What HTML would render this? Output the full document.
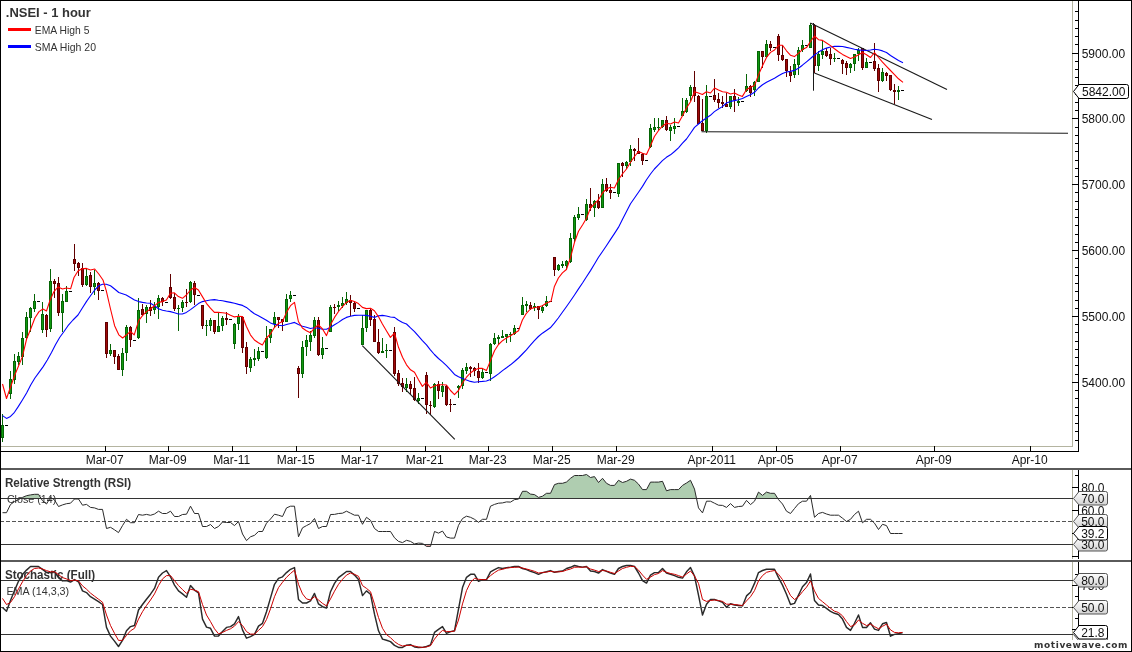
<!DOCTYPE html><html><head><meta charset="utf-8"><title>.NSEI - 1 hour</title><style>html,body{margin:0;padding:0;background:#fff;overflow:hidden}svg text{shape-rendering:auto}</style></head><body><svg width="1132" height="652" viewBox="0 0 1132 652" style="display:block;will-change:transform" font-family="Liberation Sans, sans-serif" shape-rendering="crispEdges">
<defs><linearGradient id="tg" x1="0" y1="0" x2="0" y2="1"><stop offset="0" stop-color="#ffffff"/><stop offset="1" stop-color="#d2d2d2"/></linearGradient></defs>
<rect x="0" y="0" width="1132" height="652" fill="#fff"/>
<rect x="1" y="446" width="1072" height="1" fill="#b4b4a0"/>
<rect x="1072" y="1" width="1" height="446" fill="#b4b4a0"/>
<rect x="1072" y="470" width="1" height="89" fill="#b4b4a0"/>
<rect x="1072" y="562" width="1" height="89" fill="#b4b4a0"/>
<rect x="1" y="451" width="1078" height="1" fill="#000"/>
<rect x="1078" y="1" width="1" height="451" fill="#000"/>
<rect x="1078" y="470" width="1" height="89" fill="#000"/>
<rect x="1078" y="562" width="1" height="89" fill="#000"/>
<rect x="1" y="468" width="1130" height="2" fill="#5a5a5a"/>
<rect x="1" y="560" width="1130" height="2" fill="#5a5a5a"/>
<rect x="1075" y="11" width="3" height="1" fill="#000"/>
<rect x="1075" y="20" width="3" height="1" fill="#000"/>
<rect x="1075" y="28" width="3" height="1" fill="#000"/>
<rect x="1075" y="36" width="3" height="1" fill="#000"/>
<rect x="1075" y="44" width="3" height="1" fill="#000"/>
<rect x="1072" y="53" width="6" height="1" fill="#000"/>
<text x="1081.7" y="58" font-size="12" fill="#111">5900.00</text>
<rect x="1075" y="61" width="3" height="1" fill="#000"/>
<rect x="1075" y="69" width="3" height="1" fill="#000"/>
<rect x="1075" y="77" width="3" height="1" fill="#000"/>
<rect x="1075" y="85" width="3" height="1" fill="#000"/>
<rect x="1075" y="94" width="3" height="1" fill="#000"/>
<rect x="1075" y="102" width="3" height="1" fill="#000"/>
<rect x="1075" y="110" width="3" height="1" fill="#000"/>
<rect x="1072" y="118" width="6" height="1" fill="#000"/>
<text x="1081.7" y="123" font-size="12" fill="#111">5800.00</text>
<rect x="1075" y="127" width="3" height="1" fill="#000"/>
<rect x="1075" y="135" width="3" height="1" fill="#000"/>
<rect x="1075" y="143" width="3" height="1" fill="#000"/>
<rect x="1075" y="151" width="3" height="1" fill="#000"/>
<rect x="1075" y="160" width="3" height="1" fill="#000"/>
<rect x="1075" y="168" width="3" height="1" fill="#000"/>
<rect x="1075" y="176" width="3" height="1" fill="#000"/>
<rect x="1072" y="184" width="6" height="1" fill="#000"/>
<text x="1081.7" y="189" font-size="12" fill="#111">5700.00</text>
<rect x="1075" y="192" width="3" height="1" fill="#000"/>
<rect x="1075" y="201" width="3" height="1" fill="#000"/>
<rect x="1075" y="209" width="3" height="1" fill="#000"/>
<rect x="1075" y="217" width="3" height="1" fill="#000"/>
<rect x="1075" y="225" width="3" height="1" fill="#000"/>
<rect x="1075" y="234" width="3" height="1" fill="#000"/>
<rect x="1075" y="242" width="3" height="1" fill="#000"/>
<rect x="1072" y="250" width="6" height="1" fill="#000"/>
<text x="1081.7" y="255" font-size="12" fill="#111">5600.00</text>
<rect x="1075" y="258" width="3" height="1" fill="#000"/>
<rect x="1075" y="267" width="3" height="1" fill="#000"/>
<rect x="1075" y="275" width="3" height="1" fill="#000"/>
<rect x="1075" y="283" width="3" height="1" fill="#000"/>
<rect x="1075" y="291" width="3" height="1" fill="#000"/>
<rect x="1075" y="300" width="3" height="1" fill="#000"/>
<rect x="1075" y="308" width="3" height="1" fill="#000"/>
<rect x="1072" y="316" width="6" height="1" fill="#000"/>
<text x="1081.7" y="321" font-size="12" fill="#111">5500.00</text>
<rect x="1075" y="324" width="3" height="1" fill="#000"/>
<rect x="1075" y="332" width="3" height="1" fill="#000"/>
<rect x="1075" y="341" width="3" height="1" fill="#000"/>
<rect x="1075" y="349" width="3" height="1" fill="#000"/>
<rect x="1075" y="357" width="3" height="1" fill="#000"/>
<rect x="1075" y="365" width="3" height="1" fill="#000"/>
<rect x="1075" y="374" width="3" height="1" fill="#000"/>
<rect x="1072" y="382" width="6" height="1" fill="#000"/>
<text x="1081.7" y="387" font-size="12" fill="#111">5400.00</text>
<rect x="1075" y="390" width="3" height="1" fill="#000"/>
<rect x="1075" y="398" width="3" height="1" fill="#000"/>
<rect x="1075" y="407" width="3" height="1" fill="#000"/>
<rect x="1075" y="415" width="3" height="1" fill="#000"/>
<rect x="1075" y="423" width="3" height="1" fill="#000"/>
<rect x="1075" y="431" width="3" height="1" fill="#000"/>
<rect x="1075" y="440" width="3" height="1" fill="#000"/>
<rect x="105" y="446" width="1" height="5" fill="#000"/>
<text x="104.7" y="463.8" font-size="12" fill="#111" text-anchor="middle">Mar-07</text>
<rect x="168" y="446" width="1" height="5" fill="#000"/>
<text x="167.7" y="463.8" font-size="12" fill="#111" text-anchor="middle">Mar-09</text>
<rect x="232" y="446" width="1" height="5" fill="#000"/>
<text x="231.7" y="463.8" font-size="12" fill="#111" text-anchor="middle">Mar-11</text>
<rect x="296" y="446" width="1" height="5" fill="#000"/>
<text x="295.7" y="463.8" font-size="12" fill="#111" text-anchor="middle">Mar-15</text>
<rect x="360" y="446" width="1" height="5" fill="#000"/>
<text x="359.7" y="463.8" font-size="12" fill="#111" text-anchor="middle">Mar-17</text>
<rect x="425" y="446" width="1" height="5" fill="#000"/>
<text x="424.7" y="463.8" font-size="12" fill="#111" text-anchor="middle">Mar-21</text>
<rect x="488" y="446" width="1" height="5" fill="#000"/>
<text x="487.7" y="463.8" font-size="12" fill="#111" text-anchor="middle">Mar-23</text>
<rect x="552" y="446" width="1" height="5" fill="#000"/>
<text x="551.7" y="463.8" font-size="12" fill="#111" text-anchor="middle">Mar-25</text>
<rect x="616" y="446" width="1" height="5" fill="#000"/>
<text x="615.7" y="463.8" font-size="12" fill="#111" text-anchor="middle">Mar-29</text>
<rect x="712" y="446" width="1" height="5" fill="#000"/>
<text x="711.7" y="463.8" font-size="12" fill="#111" text-anchor="middle">Apr-2011</text>
<rect x="776" y="446" width="1" height="5" fill="#000"/>
<text x="775.7" y="463.8" font-size="12" fill="#111" text-anchor="middle">Apr-05</text>
<rect x="840" y="446" width="1" height="5" fill="#000"/>
<text x="839.7" y="463.8" font-size="12" fill="#111" text-anchor="middle">Apr-07</text>
<rect x="934" y="446" width="1" height="5" fill="#000"/>
<text x="933.7" y="463.8" font-size="12" fill="#111" text-anchor="middle">Apr-09</text>
<rect x="1030" y="446" width="1" height="5" fill="#000"/>
<text x="1029.7" y="463.8" font-size="12" fill="#111" text-anchor="middle">Apr-10</text>
<rect x="2" y="414" width="1" height="28" fill="#056405"/>
<rect x="1" y="425" width="3" height="13" fill="#056405"/>
<rect x="2" y="426" width="1" height="11" fill="#0f9a0f"/>
<rect x="5" y="425" width="3" height="1" fill="#000"/>
<rect x="10" y="371" width="1" height="28" fill="#056405"/>
<rect x="9" y="379" width="3" height="15" fill="#056405"/>
<rect x="10" y="380" width="1" height="13" fill="#0f9a0f"/>
<rect x="14" y="354" width="1" height="30" fill="#056405"/>
<rect x="13" y="361" width="3" height="19" fill="#056405"/>
<rect x="14" y="362" width="1" height="17" fill="#0f9a0f"/>
<rect x="18" y="352" width="1" height="13" fill="#056405"/>
<rect x="17" y="356" width="3" height="6" fill="#056405"/>
<rect x="18" y="357" width="1" height="4" fill="#0f9a0f"/>
<rect x="22" y="332" width="1" height="33" fill="#056405"/>
<rect x="21" y="338" width="3" height="19" fill="#056405"/>
<rect x="22" y="339" width="1" height="17" fill="#0f9a0f"/>
<rect x="26" y="312" width="1" height="28" fill="#056405"/>
<rect x="25" y="317" width="3" height="21" fill="#056405"/>
<rect x="26" y="318" width="1" height="19" fill="#0f9a0f"/>
<rect x="30" y="307" width="1" height="25" fill="#056405"/>
<rect x="29" y="308" width="3" height="10" fill="#056405"/>
<rect x="30" y="309" width="1" height="8" fill="#0f9a0f"/>
<rect x="34" y="294" width="1" height="18" fill="#056405"/>
<rect x="33" y="301" width="3" height="8" fill="#056405"/>
<rect x="34" y="302" width="1" height="6" fill="#0f9a0f"/>
<rect x="37" y="301" width="3" height="1" fill="#000"/>
<rect x="42" y="302" width="1" height="31" fill="#056405"/>
<rect x="41" y="314" width="3" height="16" fill="#056405"/>
<rect x="42" y="315" width="1" height="14" fill="#0f9a0f"/>
<rect x="46" y="314" width="1" height="23" fill="#600000"/>
<rect x="45" y="315" width="3" height="15" fill="#600000"/>
<rect x="46" y="316" width="1" height="13" fill="#a00808"/>
<rect x="50" y="269" width="1" height="63" fill="#056405"/>
<rect x="49" y="281" width="3" height="48" fill="#056405"/>
<rect x="50" y="282" width="1" height="46" fill="#0f9a0f"/>
<rect x="54" y="279" width="1" height="19" fill="#600000"/>
<rect x="53" y="281" width="3" height="3" fill="#600000"/>
<rect x="54" y="282" width="1" height="1" fill="#a00808"/>
<rect x="58" y="277" width="1" height="39" fill="#600000"/>
<rect x="57" y="283" width="3" height="30" fill="#600000"/>
<rect x="58" y="284" width="1" height="28" fill="#a00808"/>
<rect x="62" y="294" width="1" height="38" fill="#056405"/>
<rect x="61" y="301" width="3" height="12" fill="#056405"/>
<rect x="62" y="302" width="1" height="10" fill="#0f9a0f"/>
<rect x="66" y="286" width="1" height="16" fill="#056405"/>
<rect x="65" y="291" width="3" height="11" fill="#056405"/>
<rect x="66" y="292" width="1" height="9" fill="#0f9a0f"/>
<rect x="69" y="291" width="3" height="1" fill="#000"/>
<rect x="74" y="244" width="1" height="27" fill="#600000"/>
<rect x="73" y="259" width="3" height="5" fill="#600000"/>
<rect x="74" y="260" width="1" height="3" fill="#a00808"/>
<rect x="78" y="262" width="1" height="14" fill="#600000"/>
<rect x="77" y="263" width="3" height="5" fill="#600000"/>
<rect x="78" y="264" width="1" height="3" fill="#a00808"/>
<rect x="82" y="263" width="1" height="24" fill="#600000"/>
<rect x="81" y="268" width="3" height="17" fill="#600000"/>
<rect x="82" y="269" width="1" height="15" fill="#a00808"/>
<rect x="86" y="269" width="1" height="17" fill="#056405"/>
<rect x="85" y="276" width="3" height="9" fill="#056405"/>
<rect x="86" y="277" width="1" height="7" fill="#0f9a0f"/>
<rect x="90" y="272" width="1" height="21" fill="#600000"/>
<rect x="89" y="275" width="3" height="12" fill="#600000"/>
<rect x="90" y="276" width="1" height="10" fill="#a00808"/>
<rect x="94" y="270" width="1" height="25" fill="#056405"/>
<rect x="93" y="283" width="3" height="4" fill="#056405"/>
<rect x="94" y="284" width="1" height="2" fill="#0f9a0f"/>
<rect x="98" y="282" width="1" height="18" fill="#600000"/>
<rect x="97" y="283" width="3" height="8" fill="#600000"/>
<rect x="98" y="284" width="1" height="6" fill="#a00808"/>
<rect x="101" y="290" width="3" height="1" fill="#000"/>
<rect x="106" y="322" width="1" height="36" fill="#600000"/>
<rect x="105" y="322" width="3" height="32" fill="#600000"/>
<rect x="106" y="323" width="1" height="30" fill="#a00808"/>
<rect x="110" y="344" width="1" height="12" fill="#056405"/>
<rect x="109" y="350" width="3" height="4" fill="#056405"/>
<rect x="110" y="351" width="1" height="2" fill="#0f9a0f"/>
<rect x="114" y="350" width="1" height="14" fill="#600000"/>
<rect x="113" y="350" width="3" height="7" fill="#600000"/>
<rect x="114" y="351" width="1" height="5" fill="#a00808"/>
<rect x="118" y="354" width="1" height="16" fill="#600000"/>
<rect x="117" y="356" width="3" height="14" fill="#600000"/>
<rect x="118" y="357" width="1" height="12" fill="#a00808"/>
<rect x="122" y="348" width="1" height="28" fill="#056405"/>
<rect x="121" y="353" width="3" height="17" fill="#056405"/>
<rect x="122" y="354" width="1" height="15" fill="#0f9a0f"/>
<rect x="126" y="325" width="1" height="36" fill="#056405"/>
<rect x="125" y="327" width="3" height="26" fill="#056405"/>
<rect x="126" y="328" width="1" height="24" fill="#0f9a0f"/>
<rect x="130" y="326" width="1" height="21" fill="#600000"/>
<rect x="129" y="327" width="3" height="13" fill="#600000"/>
<rect x="130" y="328" width="1" height="11" fill="#a00808"/>
<rect x="133" y="340" width="3" height="1" fill="#000"/>
<rect x="138" y="298" width="1" height="41" fill="#056405"/>
<rect x="137" y="310" width="3" height="28" fill="#056405"/>
<rect x="138" y="311" width="1" height="26" fill="#0f9a0f"/>
<rect x="142" y="304" width="1" height="12" fill="#600000"/>
<rect x="141" y="309" width="3" height="6" fill="#600000"/>
<rect x="142" y="310" width="1" height="4" fill="#a00808"/>
<rect x="146" y="305" width="1" height="18" fill="#056405"/>
<rect x="145" y="307" width="3" height="7" fill="#056405"/>
<rect x="146" y="308" width="1" height="5" fill="#0f9a0f"/>
<rect x="150" y="300" width="1" height="16" fill="#600000"/>
<rect x="149" y="307" width="3" height="4" fill="#600000"/>
<rect x="150" y="308" width="1" height="2" fill="#a00808"/>
<rect x="154" y="302" width="1" height="12" fill="#056405"/>
<rect x="153" y="307" width="3" height="3" fill="#056405"/>
<rect x="154" y="308" width="1" height="1" fill="#0f9a0f"/>
<rect x="158" y="295" width="1" height="24" fill="#056405"/>
<rect x="157" y="298" width="3" height="9" fill="#056405"/>
<rect x="158" y="299" width="1" height="7" fill="#0f9a0f"/>
<rect x="162" y="297" width="1" height="9" fill="#600000"/>
<rect x="161" y="298" width="3" height="4" fill="#600000"/>
<rect x="162" y="299" width="1" height="2" fill="#a00808"/>
<rect x="165" y="302" width="3" height="1" fill="#000"/>
<rect x="170" y="274" width="1" height="25" fill="#600000"/>
<rect x="169" y="287" width="3" height="11" fill="#600000"/>
<rect x="170" y="288" width="1" height="9" fill="#a00808"/>
<rect x="174" y="293" width="1" height="18" fill="#600000"/>
<rect x="173" y="297" width="3" height="12" fill="#600000"/>
<rect x="174" y="298" width="1" height="10" fill="#a00808"/>
<rect x="178" y="305" width="1" height="26" fill="#056405"/>
<rect x="177" y="308" width="3" height="1" fill="#056405"/>
<rect x="182" y="300" width="1" height="12" fill="#056405"/>
<rect x="181" y="302" width="3" height="6" fill="#056405"/>
<rect x="182" y="303" width="1" height="4" fill="#0f9a0f"/>
<rect x="186" y="289" width="1" height="18" fill="#600000"/>
<rect x="185" y="302" width="3" height="1" fill="#600000"/>
<rect x="190" y="281" width="1" height="22" fill="#056405"/>
<rect x="189" y="282" width="3" height="20" fill="#056405"/>
<rect x="190" y="283" width="1" height="18" fill="#0f9a0f"/>
<rect x="194" y="281" width="1" height="24" fill="#600000"/>
<rect x="193" y="283" width="3" height="12" fill="#600000"/>
<rect x="194" y="284" width="1" height="10" fill="#a00808"/>
<rect x="197" y="295" width="3" height="1" fill="#000"/>
<rect x="202" y="305" width="1" height="24" fill="#600000"/>
<rect x="201" y="305" width="3" height="21" fill="#600000"/>
<rect x="202" y="306" width="1" height="19" fill="#a00808"/>
<rect x="206" y="320" width="1" height="16" fill="#056405"/>
<rect x="205" y="325" width="3" height="1" fill="#056405"/>
<rect x="210" y="318" width="1" height="13" fill="#056405"/>
<rect x="209" y="320" width="3" height="6" fill="#056405"/>
<rect x="210" y="321" width="1" height="4" fill="#0f9a0f"/>
<rect x="214" y="320" width="1" height="14" fill="#600000"/>
<rect x="213" y="320" width="3" height="12" fill="#600000"/>
<rect x="214" y="321" width="1" height="10" fill="#a00808"/>
<rect x="218" y="312" width="1" height="20" fill="#056405"/>
<rect x="217" y="326" width="3" height="6" fill="#056405"/>
<rect x="218" y="327" width="1" height="4" fill="#0f9a0f"/>
<rect x="222" y="316" width="1" height="15" fill="#056405"/>
<rect x="221" y="318" width="3" height="8" fill="#056405"/>
<rect x="222" y="319" width="1" height="6" fill="#0f9a0f"/>
<rect x="226" y="312" width="1" height="13" fill="#600000"/>
<rect x="225" y="318" width="3" height="2" fill="#600000"/>
<rect x="229" y="319" width="3" height="1" fill="#000"/>
<rect x="234" y="323" width="1" height="26" fill="#056405"/>
<rect x="233" y="324" width="3" height="20" fill="#056405"/>
<rect x="234" y="325" width="1" height="18" fill="#0f9a0f"/>
<rect x="238" y="314" width="1" height="16" fill="#056405"/>
<rect x="237" y="316" width="3" height="8" fill="#056405"/>
<rect x="238" y="317" width="1" height="6" fill="#0f9a0f"/>
<rect x="242" y="317" width="1" height="36" fill="#600000"/>
<rect x="241" y="317" width="3" height="31" fill="#600000"/>
<rect x="242" y="318" width="1" height="29" fill="#a00808"/>
<rect x="246" y="342" width="1" height="32" fill="#600000"/>
<rect x="245" y="347" width="3" height="20" fill="#600000"/>
<rect x="246" y="348" width="1" height="18" fill="#a00808"/>
<rect x="250" y="357" width="1" height="15" fill="#056405"/>
<rect x="249" y="359" width="3" height="9" fill="#056405"/>
<rect x="250" y="360" width="1" height="7" fill="#0f9a0f"/>
<rect x="254" y="349" width="1" height="17" fill="#056405"/>
<rect x="253" y="358" width="3" height="2" fill="#056405"/>
<rect x="258" y="347" width="1" height="14" fill="#056405"/>
<rect x="257" y="351" width="3" height="8" fill="#056405"/>
<rect x="258" y="352" width="1" height="6" fill="#0f9a0f"/>
<rect x="261" y="351" width="3" height="1" fill="#000"/>
<rect x="266" y="326" width="1" height="33" fill="#056405"/>
<rect x="265" y="338" width="3" height="20" fill="#056405"/>
<rect x="266" y="339" width="1" height="18" fill="#0f9a0f"/>
<rect x="270" y="329" width="1" height="14" fill="#056405"/>
<rect x="269" y="329" width="3" height="9" fill="#056405"/>
<rect x="270" y="330" width="1" height="7" fill="#0f9a0f"/>
<rect x="274" y="312" width="1" height="16" fill="#056405"/>
<rect x="273" y="317" width="3" height="7" fill="#056405"/>
<rect x="274" y="318" width="1" height="5" fill="#0f9a0f"/>
<rect x="278" y="317" width="1" height="11" fill="#600000"/>
<rect x="277" y="317" width="3" height="3" fill="#600000"/>
<rect x="278" y="318" width="1" height="1" fill="#a00808"/>
<rect x="282" y="319" width="1" height="12" fill="#600000"/>
<rect x="281" y="319" width="3" height="3" fill="#600000"/>
<rect x="282" y="320" width="1" height="1" fill="#a00808"/>
<rect x="286" y="294" width="1" height="28" fill="#056405"/>
<rect x="285" y="299" width="3" height="23" fill="#056405"/>
<rect x="286" y="300" width="1" height="21" fill="#0f9a0f"/>
<rect x="290" y="291" width="1" height="11" fill="#056405"/>
<rect x="289" y="295" width="3" height="4" fill="#056405"/>
<rect x="290" y="296" width="1" height="2" fill="#0f9a0f"/>
<rect x="293" y="295" width="3" height="1" fill="#000"/>
<rect x="298" y="366" width="1" height="32" fill="#600000"/>
<rect x="297" y="368" width="3" height="6" fill="#600000"/>
<rect x="298" y="369" width="1" height="4" fill="#a00808"/>
<rect x="302" y="341" width="1" height="37" fill="#056405"/>
<rect x="301" y="347" width="3" height="27" fill="#056405"/>
<rect x="302" y="348" width="1" height="25" fill="#0f9a0f"/>
<rect x="306" y="335" width="1" height="21" fill="#056405"/>
<rect x="305" y="340" width="3" height="7" fill="#056405"/>
<rect x="306" y="341" width="1" height="5" fill="#0f9a0f"/>
<rect x="310" y="331" width="1" height="20" fill="#056405"/>
<rect x="309" y="335" width="3" height="7" fill="#056405"/>
<rect x="310" y="336" width="1" height="5" fill="#0f9a0f"/>
<rect x="314" y="317" width="1" height="21" fill="#056405"/>
<rect x="313" y="320" width="3" height="16" fill="#056405"/>
<rect x="314" y="321" width="1" height="14" fill="#0f9a0f"/>
<rect x="318" y="317" width="1" height="39" fill="#600000"/>
<rect x="317" y="320" width="3" height="35" fill="#600000"/>
<rect x="318" y="321" width="1" height="33" fill="#a00808"/>
<rect x="322" y="337" width="1" height="22" fill="#056405"/>
<rect x="321" y="348" width="3" height="7" fill="#056405"/>
<rect x="322" y="349" width="1" height="5" fill="#0f9a0f"/>
<rect x="325" y="348" width="3" height="1" fill="#000"/>
<rect x="330" y="305" width="1" height="27" fill="#056405"/>
<rect x="329" y="307" width="3" height="25" fill="#056405"/>
<rect x="330" y="308" width="1" height="23" fill="#0f9a0f"/>
<rect x="334" y="304" width="1" height="10" fill="#600000"/>
<rect x="333" y="307" width="3" height="1" fill="#600000"/>
<rect x="338" y="301" width="1" height="10" fill="#056405"/>
<rect x="337" y="305" width="3" height="2" fill="#056405"/>
<rect x="342" y="297" width="1" height="11" fill="#056405"/>
<rect x="341" y="303" width="3" height="3" fill="#056405"/>
<rect x="342" y="304" width="1" height="1" fill="#0f9a0f"/>
<rect x="346" y="292" width="1" height="13" fill="#056405"/>
<rect x="345" y="299" width="3" height="4" fill="#056405"/>
<rect x="346" y="300" width="1" height="2" fill="#0f9a0f"/>
<rect x="350" y="295" width="1" height="21" fill="#600000"/>
<rect x="349" y="300" width="3" height="3" fill="#600000"/>
<rect x="350" y="301" width="1" height="1" fill="#a00808"/>
<rect x="354" y="302" width="1" height="10" fill="#600000"/>
<rect x="353" y="303" width="3" height="6" fill="#600000"/>
<rect x="354" y="304" width="1" height="4" fill="#a00808"/>
<rect x="357" y="308" width="3" height="1" fill="#000"/>
<rect x="362" y="315" width="1" height="30" fill="#056405"/>
<rect x="361" y="328" width="3" height="17" fill="#056405"/>
<rect x="362" y="329" width="1" height="15" fill="#0f9a0f"/>
<rect x="366" y="310" width="1" height="22" fill="#056405"/>
<rect x="365" y="310" width="3" height="18" fill="#056405"/>
<rect x="366" y="311" width="1" height="16" fill="#0f9a0f"/>
<rect x="370" y="308" width="1" height="18" fill="#600000"/>
<rect x="369" y="310" width="3" height="10" fill="#600000"/>
<rect x="370" y="311" width="1" height="8" fill="#a00808"/>
<rect x="374" y="315" width="1" height="27" fill="#600000"/>
<rect x="373" y="319" width="3" height="23" fill="#600000"/>
<rect x="374" y="320" width="1" height="21" fill="#a00808"/>
<rect x="378" y="329" width="1" height="25" fill="#600000"/>
<rect x="377" y="342" width="3" height="11" fill="#600000"/>
<rect x="378" y="343" width="1" height="9" fill="#a00808"/>
<rect x="382" y="338" width="1" height="15" fill="#056405"/>
<rect x="381" y="351" width="3" height="2" fill="#056405"/>
<rect x="386" y="344" width="1" height="14" fill="#056405"/>
<rect x="385" y="350" width="3" height="1" fill="#056405"/>
<rect x="389" y="350" width="3" height="1" fill="#000"/>
<rect x="394" y="327" width="1" height="49" fill="#600000"/>
<rect x="393" y="332" width="3" height="42" fill="#600000"/>
<rect x="394" y="333" width="1" height="40" fill="#a00808"/>
<rect x="398" y="370" width="1" height="16" fill="#600000"/>
<rect x="397" y="373" width="3" height="11" fill="#600000"/>
<rect x="398" y="374" width="1" height="9" fill="#a00808"/>
<rect x="402" y="378" width="1" height="14" fill="#600000"/>
<rect x="401" y="383" width="3" height="4" fill="#600000"/>
<rect x="402" y="384" width="1" height="2" fill="#a00808"/>
<rect x="406" y="378" width="1" height="14" fill="#056405"/>
<rect x="405" y="384" width="3" height="4" fill="#056405"/>
<rect x="406" y="385" width="1" height="2" fill="#0f9a0f"/>
<rect x="410" y="381" width="1" height="13" fill="#600000"/>
<rect x="409" y="384" width="3" height="5" fill="#600000"/>
<rect x="410" y="385" width="1" height="3" fill="#a00808"/>
<rect x="414" y="377" width="1" height="24" fill="#600000"/>
<rect x="413" y="388" width="3" height="12" fill="#600000"/>
<rect x="414" y="389" width="1" height="10" fill="#a00808"/>
<rect x="418" y="393" width="1" height="11" fill="#056405"/>
<rect x="417" y="398" width="3" height="3" fill="#056405"/>
<rect x="418" y="399" width="1" height="1" fill="#0f9a0f"/>
<rect x="421" y="398" width="3" height="1" fill="#000"/>
<rect x="426" y="372" width="1" height="42" fill="#600000"/>
<rect x="425" y="375" width="3" height="30" fill="#600000"/>
<rect x="426" y="376" width="1" height="28" fill="#a00808"/>
<rect x="430" y="401" width="1" height="14" fill="#600000"/>
<rect x="429" y="405" width="3" height="1" fill="#600000"/>
<rect x="434" y="383" width="1" height="25" fill="#056405"/>
<rect x="433" y="384" width="3" height="23" fill="#056405"/>
<rect x="434" y="385" width="1" height="21" fill="#0f9a0f"/>
<rect x="438" y="381" width="1" height="18" fill="#600000"/>
<rect x="437" y="384" width="3" height="7" fill="#600000"/>
<rect x="438" y="385" width="1" height="5" fill="#a00808"/>
<rect x="442" y="382" width="1" height="15" fill="#056405"/>
<rect x="441" y="386" width="3" height="6" fill="#056405"/>
<rect x="442" y="387" width="1" height="4" fill="#0f9a0f"/>
<rect x="446" y="385" width="1" height="21" fill="#600000"/>
<rect x="445" y="386" width="3" height="19" fill="#600000"/>
<rect x="446" y="387" width="1" height="17" fill="#a00808"/>
<rect x="450" y="399" width="1" height="13" fill="#600000"/>
<rect x="449" y="404" width="3" height="1" fill="#600000"/>
<rect x="453" y="404" width="3" height="1" fill="#000"/>
<rect x="458" y="385" width="1" height="13" fill="#056405"/>
<rect x="457" y="386" width="3" height="2" fill="#056405"/>
<rect x="462" y="368" width="1" height="21" fill="#056405"/>
<rect x="461" y="370" width="3" height="16" fill="#056405"/>
<rect x="462" y="371" width="1" height="14" fill="#0f9a0f"/>
<rect x="466" y="363" width="1" height="11" fill="#056405"/>
<rect x="465" y="367" width="3" height="4" fill="#056405"/>
<rect x="466" y="368" width="1" height="2" fill="#0f9a0f"/>
<rect x="470" y="366" width="1" height="11" fill="#600000"/>
<rect x="469" y="367" width="3" height="2" fill="#600000"/>
<rect x="474" y="367" width="1" height="9" fill="#600000"/>
<rect x="473" y="368" width="3" height="3" fill="#600000"/>
<rect x="474" y="369" width="1" height="1" fill="#a00808"/>
<rect x="478" y="363" width="1" height="20" fill="#600000"/>
<rect x="477" y="371" width="3" height="7" fill="#600000"/>
<rect x="478" y="372" width="1" height="5" fill="#a00808"/>
<rect x="482" y="369" width="1" height="10" fill="#056405"/>
<rect x="481" y="372" width="3" height="6" fill="#056405"/>
<rect x="482" y="373" width="1" height="4" fill="#0f9a0f"/>
<rect x="485" y="372" width="3" height="1" fill="#000"/>
<rect x="490" y="343" width="1" height="38" fill="#056405"/>
<rect x="489" y="344" width="3" height="30" fill="#056405"/>
<rect x="490" y="345" width="1" height="28" fill="#0f9a0f"/>
<rect x="494" y="333" width="1" height="12" fill="#056405"/>
<rect x="493" y="338" width="3" height="6" fill="#056405"/>
<rect x="494" y="339" width="1" height="4" fill="#0f9a0f"/>
<rect x="498" y="335" width="1" height="10" fill="#056405"/>
<rect x="497" y="337" width="3" height="2" fill="#056405"/>
<rect x="502" y="330" width="1" height="8" fill="#056405"/>
<rect x="501" y="336" width="3" height="2" fill="#056405"/>
<rect x="506" y="334" width="1" height="9" fill="#056405"/>
<rect x="505" y="334" width="3" height="3" fill="#056405"/>
<rect x="506" y="335" width="1" height="1" fill="#0f9a0f"/>
<rect x="510" y="332" width="1" height="10" fill="#056405"/>
<rect x="509" y="334" width="3" height="1" fill="#056405"/>
<rect x="514" y="325" width="1" height="10" fill="#056405"/>
<rect x="513" y="328" width="3" height="6" fill="#056405"/>
<rect x="514" y="329" width="1" height="4" fill="#0f9a0f"/>
<rect x="517" y="328" width="3" height="1" fill="#000"/>
<rect x="522" y="297" width="1" height="18" fill="#056405"/>
<rect x="521" y="305" width="3" height="10" fill="#056405"/>
<rect x="522" y="306" width="1" height="8" fill="#0f9a0f"/>
<rect x="526" y="301" width="1" height="11" fill="#056405"/>
<rect x="525" y="304" width="3" height="2" fill="#056405"/>
<rect x="530" y="302" width="1" height="8" fill="#600000"/>
<rect x="529" y="305" width="3" height="4" fill="#600000"/>
<rect x="530" y="306" width="1" height="2" fill="#a00808"/>
<rect x="534" y="303" width="1" height="8" fill="#056405"/>
<rect x="533" y="306" width="3" height="2" fill="#056405"/>
<rect x="538" y="306" width="1" height="13" fill="#600000"/>
<rect x="537" y="306" width="3" height="4" fill="#600000"/>
<rect x="538" y="307" width="1" height="2" fill="#a00808"/>
<rect x="542" y="305" width="1" height="8" fill="#056405"/>
<rect x="541" y="307" width="3" height="4" fill="#056405"/>
<rect x="542" y="308" width="1" height="2" fill="#0f9a0f"/>
<rect x="546" y="296" width="1" height="11" fill="#056405"/>
<rect x="545" y="301" width="3" height="5" fill="#056405"/>
<rect x="546" y="302" width="1" height="3" fill="#0f9a0f"/>
<rect x="549" y="301" width="3" height="1" fill="#000"/>
<rect x="554" y="257" width="1" height="19" fill="#600000"/>
<rect x="553" y="257" width="3" height="13" fill="#600000"/>
<rect x="554" y="258" width="1" height="11" fill="#a00808"/>
<rect x="558" y="264" width="1" height="7" fill="#056405"/>
<rect x="557" y="265" width="3" height="5" fill="#056405"/>
<rect x="558" y="266" width="1" height="3" fill="#0f9a0f"/>
<rect x="562" y="261" width="1" height="7" fill="#056405"/>
<rect x="561" y="264" width="3" height="2" fill="#056405"/>
<rect x="566" y="260" width="1" height="10" fill="#056405"/>
<rect x="565" y="261" width="3" height="5" fill="#056405"/>
<rect x="566" y="262" width="1" height="3" fill="#0f9a0f"/>
<rect x="570" y="233" width="1" height="30" fill="#056405"/>
<rect x="569" y="238" width="3" height="24" fill="#056405"/>
<rect x="570" y="239" width="1" height="22" fill="#0f9a0f"/>
<rect x="574" y="215" width="1" height="27" fill="#056405"/>
<rect x="573" y="217" width="3" height="22" fill="#056405"/>
<rect x="574" y="218" width="1" height="20" fill="#0f9a0f"/>
<rect x="578" y="207" width="1" height="13" fill="#056405"/>
<rect x="577" y="214" width="3" height="4" fill="#056405"/>
<rect x="578" y="215" width="1" height="2" fill="#0f9a0f"/>
<rect x="581" y="214" width="3" height="1" fill="#000"/>
<rect x="586" y="199" width="1" height="22" fill="#056405"/>
<rect x="585" y="204" width="3" height="16" fill="#056405"/>
<rect x="586" y="205" width="1" height="14" fill="#0f9a0f"/>
<rect x="590" y="188" width="1" height="23" fill="#600000"/>
<rect x="589" y="204" width="3" height="4" fill="#600000"/>
<rect x="590" y="205" width="1" height="2" fill="#a00808"/>
<rect x="594" y="200" width="1" height="17" fill="#056405"/>
<rect x="593" y="201" width="3" height="7" fill="#056405"/>
<rect x="594" y="202" width="1" height="5" fill="#0f9a0f"/>
<rect x="598" y="194" width="1" height="15" fill="#600000"/>
<rect x="597" y="201" width="3" height="7" fill="#600000"/>
<rect x="598" y="202" width="1" height="5" fill="#a00808"/>
<rect x="602" y="179" width="1" height="29" fill="#056405"/>
<rect x="601" y="184" width="3" height="24" fill="#056405"/>
<rect x="602" y="185" width="1" height="22" fill="#0f9a0f"/>
<rect x="606" y="178" width="1" height="14" fill="#600000"/>
<rect x="605" y="184" width="3" height="7" fill="#600000"/>
<rect x="606" y="185" width="1" height="5" fill="#a00808"/>
<rect x="610" y="184" width="1" height="15" fill="#600000"/>
<rect x="609" y="190" width="3" height="3" fill="#600000"/>
<rect x="610" y="191" width="1" height="1" fill="#a00808"/>
<rect x="613" y="192" width="3" height="1" fill="#000"/>
<rect x="618" y="163" width="1" height="34" fill="#056405"/>
<rect x="617" y="163" width="3" height="31" fill="#056405"/>
<rect x="618" y="164" width="1" height="29" fill="#0f9a0f"/>
<rect x="622" y="162" width="1" height="15" fill="#600000"/>
<rect x="621" y="163" width="3" height="3" fill="#600000"/>
<rect x="622" y="164" width="1" height="1" fill="#a00808"/>
<rect x="626" y="161" width="1" height="8" fill="#056405"/>
<rect x="625" y="162" width="3" height="4" fill="#056405"/>
<rect x="626" y="163" width="1" height="2" fill="#0f9a0f"/>
<rect x="630" y="145" width="1" height="21" fill="#056405"/>
<rect x="629" y="149" width="3" height="13" fill="#056405"/>
<rect x="630" y="150" width="1" height="11" fill="#0f9a0f"/>
<rect x="634" y="148" width="1" height="13" fill="#600000"/>
<rect x="633" y="149" width="3" height="2" fill="#600000"/>
<rect x="638" y="138" width="1" height="16" fill="#600000"/>
<rect x="637" y="151" width="3" height="3" fill="#600000"/>
<rect x="638" y="152" width="1" height="1" fill="#a00808"/>
<rect x="642" y="153" width="1" height="12" fill="#600000"/>
<rect x="641" y="154" width="3" height="7" fill="#600000"/>
<rect x="642" y="155" width="1" height="5" fill="#a00808"/>
<rect x="645" y="160" width="3" height="1" fill="#000"/>
<rect x="650" y="124" width="1" height="24" fill="#056405"/>
<rect x="649" y="128" width="3" height="19" fill="#056405"/>
<rect x="650" y="129" width="1" height="17" fill="#0f9a0f"/>
<rect x="654" y="118" width="1" height="14" fill="#056405"/>
<rect x="653" y="127" width="3" height="3" fill="#056405"/>
<rect x="654" y="128" width="1" height="1" fill="#0f9a0f"/>
<rect x="658" y="118" width="1" height="12" fill="#056405"/>
<rect x="657" y="127" width="3" height="1" fill="#056405"/>
<rect x="662" y="120" width="1" height="8" fill="#056405"/>
<rect x="661" y="120" width="3" height="7" fill="#056405"/>
<rect x="662" y="121" width="1" height="5" fill="#0f9a0f"/>
<rect x="666" y="116" width="1" height="15" fill="#600000"/>
<rect x="665" y="120" width="3" height="10" fill="#600000"/>
<rect x="666" y="121" width="1" height="8" fill="#a00808"/>
<rect x="670" y="125" width="1" height="16" fill="#056405"/>
<rect x="669" y="127" width="3" height="4" fill="#056405"/>
<rect x="670" y="128" width="1" height="2" fill="#0f9a0f"/>
<rect x="674" y="118" width="1" height="16" fill="#056405"/>
<rect x="673" y="126" width="3" height="3" fill="#056405"/>
<rect x="674" y="127" width="1" height="1" fill="#0f9a0f"/>
<rect x="677" y="126" width="3" height="1" fill="#000"/>
<rect x="682" y="98" width="1" height="18" fill="#056405"/>
<rect x="681" y="111" width="3" height="5" fill="#056405"/>
<rect x="682" y="112" width="1" height="3" fill="#0f9a0f"/>
<rect x="686" y="98" width="1" height="15" fill="#056405"/>
<rect x="685" y="100" width="3" height="12" fill="#056405"/>
<rect x="686" y="101" width="1" height="10" fill="#0f9a0f"/>
<rect x="690" y="85" width="1" height="16" fill="#056405"/>
<rect x="689" y="87" width="3" height="9" fill="#056405"/>
<rect x="690" y="88" width="1" height="7" fill="#0f9a0f"/>
<rect x="694" y="71" width="1" height="31" fill="#600000"/>
<rect x="693" y="87" width="3" height="9" fill="#600000"/>
<rect x="694" y="88" width="1" height="7" fill="#a00808"/>
<rect x="698" y="95" width="1" height="29" fill="#600000"/>
<rect x="697" y="96" width="3" height="28" fill="#600000"/>
<rect x="698" y="97" width="1" height="26" fill="#a00808"/>
<rect x="702" y="99" width="1" height="32" fill="#600000"/>
<rect x="701" y="123" width="3" height="8" fill="#600000"/>
<rect x="702" y="124" width="1" height="6" fill="#a00808"/>
<rect x="706" y="85" width="1" height="48" fill="#056405"/>
<rect x="705" y="96" width="3" height="35" fill="#056405"/>
<rect x="706" y="97" width="1" height="33" fill="#0f9a0f"/>
<rect x="709" y="96" width="3" height="1" fill="#000"/>
<rect x="714" y="79" width="1" height="23" fill="#600000"/>
<rect x="713" y="95" width="3" height="5" fill="#600000"/>
<rect x="714" y="96" width="1" height="3" fill="#a00808"/>
<rect x="718" y="93" width="1" height="15" fill="#600000"/>
<rect x="717" y="99" width="3" height="4" fill="#600000"/>
<rect x="718" y="100" width="1" height="2" fill="#a00808"/>
<rect x="722" y="96" width="1" height="12" fill="#600000"/>
<rect x="721" y="102" width="3" height="2" fill="#600000"/>
<rect x="726" y="93" width="1" height="14" fill="#600000"/>
<rect x="725" y="104" width="3" height="3" fill="#600000"/>
<rect x="726" y="105" width="1" height="1" fill="#a00808"/>
<rect x="730" y="96" width="1" height="13" fill="#056405"/>
<rect x="729" y="96" width="3" height="11" fill="#056405"/>
<rect x="730" y="97" width="1" height="9" fill="#0f9a0f"/>
<rect x="734" y="89" width="1" height="23" fill="#600000"/>
<rect x="733" y="96" width="3" height="4" fill="#600000"/>
<rect x="734" y="97" width="1" height="2" fill="#a00808"/>
<rect x="738" y="97" width="1" height="9" fill="#056405"/>
<rect x="737" y="101" width="3" height="2" fill="#056405"/>
<rect x="741" y="101" width="3" height="1" fill="#000"/>
<rect x="746" y="74" width="1" height="18" fill="#056405"/>
<rect x="745" y="86" width="3" height="5" fill="#056405"/>
<rect x="746" y="87" width="1" height="3" fill="#0f9a0f"/>
<rect x="750" y="85" width="1" height="12" fill="#600000"/>
<rect x="749" y="86" width="3" height="7" fill="#600000"/>
<rect x="750" y="87" width="1" height="5" fill="#a00808"/>
<rect x="754" y="81" width="1" height="15" fill="#056405"/>
<rect x="753" y="82" width="3" height="8" fill="#056405"/>
<rect x="754" y="83" width="1" height="6" fill="#0f9a0f"/>
<rect x="758" y="51" width="1" height="31" fill="#056405"/>
<rect x="757" y="51" width="3" height="31" fill="#056405"/>
<rect x="758" y="52" width="1" height="29" fill="#0f9a0f"/>
<rect x="762" y="51" width="1" height="17" fill="#600000"/>
<rect x="761" y="51" width="3" height="6" fill="#600000"/>
<rect x="762" y="52" width="1" height="4" fill="#a00808"/>
<rect x="766" y="40" width="1" height="17" fill="#056405"/>
<rect x="765" y="44" width="3" height="13" fill="#056405"/>
<rect x="766" y="45" width="1" height="11" fill="#0f9a0f"/>
<rect x="770" y="41" width="1" height="10" fill="#600000"/>
<rect x="769" y="44" width="3" height="4" fill="#600000"/>
<rect x="770" y="45" width="1" height="2" fill="#a00808"/>
<rect x="773" y="47" width="3" height="1" fill="#000"/>
<rect x="778" y="34" width="1" height="27" fill="#600000"/>
<rect x="777" y="36" width="3" height="19" fill="#600000"/>
<rect x="778" y="37" width="1" height="17" fill="#a00808"/>
<rect x="782" y="45" width="1" height="16" fill="#600000"/>
<rect x="781" y="55" width="3" height="5" fill="#600000"/>
<rect x="782" y="56" width="1" height="3" fill="#a00808"/>
<rect x="786" y="59" width="1" height="18" fill="#600000"/>
<rect x="785" y="59" width="3" height="12" fill="#600000"/>
<rect x="786" y="60" width="1" height="10" fill="#a00808"/>
<rect x="790" y="66" width="1" height="16" fill="#600000"/>
<rect x="789" y="72" width="3" height="4" fill="#600000"/>
<rect x="790" y="73" width="1" height="2" fill="#a00808"/>
<rect x="794" y="59" width="1" height="19" fill="#056405"/>
<rect x="793" y="64" width="3" height="11" fill="#056405"/>
<rect x="794" y="65" width="1" height="9" fill="#0f9a0f"/>
<rect x="798" y="47" width="1" height="28" fill="#056405"/>
<rect x="797" y="50" width="3" height="15" fill="#056405"/>
<rect x="798" y="51" width="1" height="13" fill="#0f9a0f"/>
<rect x="802" y="40" width="1" height="12" fill="#056405"/>
<rect x="801" y="45" width="3" height="5" fill="#056405"/>
<rect x="802" y="46" width="1" height="3" fill="#0f9a0f"/>
<rect x="805" y="45" width="3" height="1" fill="#000"/>
<rect x="810" y="23" width="1" height="25" fill="#056405"/>
<rect x="809" y="25" width="3" height="23" fill="#056405"/>
<rect x="810" y="26" width="1" height="21" fill="#0f9a0f"/>
<rect x="814" y="24" width="1" height="49" fill="#600000"/>
<rect x="813" y="25" width="3" height="41" fill="#600000"/>
<rect x="814" y="26" width="1" height="39" fill="#a00808"/>
<rect x="818" y="51" width="1" height="20" fill="#056405"/>
<rect x="817" y="54" width="3" height="12" fill="#056405"/>
<rect x="818" y="55" width="1" height="10" fill="#0f9a0f"/>
<rect x="822" y="41" width="1" height="18" fill="#056405"/>
<rect x="821" y="51" width="3" height="4" fill="#056405"/>
<rect x="822" y="52" width="1" height="2" fill="#0f9a0f"/>
<rect x="826" y="48" width="1" height="9" fill="#600000"/>
<rect x="825" y="51" width="3" height="5" fill="#600000"/>
<rect x="826" y="52" width="1" height="3" fill="#a00808"/>
<rect x="830" y="48" width="1" height="17" fill="#600000"/>
<rect x="829" y="54" width="3" height="5" fill="#600000"/>
<rect x="830" y="55" width="1" height="3" fill="#a00808"/>
<rect x="834" y="53" width="1" height="9" fill="#056405"/>
<rect x="833" y="58" width="3" height="1" fill="#056405"/>
<rect x="837" y="58" width="3" height="1" fill="#000"/>
<rect x="842" y="59" width="1" height="15" fill="#600000"/>
<rect x="841" y="60" width="3" height="4" fill="#600000"/>
<rect x="842" y="61" width="1" height="2" fill="#a00808"/>
<rect x="846" y="61" width="1" height="14" fill="#600000"/>
<rect x="845" y="63" width="3" height="5" fill="#600000"/>
<rect x="846" y="64" width="1" height="3" fill="#a00808"/>
<rect x="850" y="63" width="1" height="10" fill="#056405"/>
<rect x="849" y="64" width="3" height="4" fill="#056405"/>
<rect x="850" y="65" width="1" height="2" fill="#0f9a0f"/>
<rect x="854" y="54" width="1" height="17" fill="#056405"/>
<rect x="853" y="54" width="3" height="10" fill="#056405"/>
<rect x="854" y="55" width="1" height="8" fill="#0f9a0f"/>
<rect x="858" y="48" width="1" height="13" fill="#056405"/>
<rect x="857" y="50" width="3" height="4" fill="#056405"/>
<rect x="858" y="51" width="1" height="2" fill="#0f9a0f"/>
<rect x="862" y="48" width="1" height="22" fill="#600000"/>
<rect x="861" y="48" width="3" height="20" fill="#600000"/>
<rect x="862" y="49" width="1" height="18" fill="#a00808"/>
<rect x="866" y="58" width="1" height="10" fill="#056405"/>
<rect x="865" y="62" width="3" height="6" fill="#056405"/>
<rect x="866" y="63" width="1" height="4" fill="#0f9a0f"/>
<rect x="869" y="62" width="3" height="1" fill="#000"/>
<rect x="874" y="43" width="1" height="28" fill="#600000"/>
<rect x="873" y="61" width="3" height="8" fill="#600000"/>
<rect x="874" y="62" width="1" height="6" fill="#a00808"/>
<rect x="878" y="64" width="1" height="28" fill="#600000"/>
<rect x="877" y="68" width="3" height="13" fill="#600000"/>
<rect x="878" y="69" width="1" height="11" fill="#a00808"/>
<rect x="882" y="68" width="1" height="14" fill="#056405"/>
<rect x="881" y="72" width="3" height="9" fill="#056405"/>
<rect x="882" y="73" width="1" height="7" fill="#0f9a0f"/>
<rect x="886" y="72" width="1" height="9" fill="#600000"/>
<rect x="885" y="73" width="3" height="3" fill="#600000"/>
<rect x="886" y="74" width="1" height="1" fill="#a00808"/>
<rect x="890" y="75" width="1" height="16" fill="#600000"/>
<rect x="889" y="75" width="3" height="15" fill="#600000"/>
<rect x="890" y="76" width="1" height="13" fill="#a00808"/>
<rect x="894" y="84" width="1" height="20" fill="#600000"/>
<rect x="893" y="90" width="3" height="2" fill="#600000"/>
<rect x="898" y="86" width="1" height="14" fill="#056405"/>
<rect x="897" y="90" width="3" height="2" fill="#056405"/>
<rect x="901" y="90" width="3" height="1" fill="#000"/>
<line x1="362.3" y1="345.7" x2="454.8" y2="439.4" stroke="#1a1a1a" stroke-width="1.15" style="shape-rendering:auto"/>
<line x1="701.5" y1="131.7" x2="1068" y2="133.2" stroke="#1a1a1a" stroke-width="1.1" style="shape-rendering:auto"/>
<line x1="810.3" y1="23.1" x2="947" y2="89.6" stroke="#1a1a1a" stroke-width="1.15" style="shape-rendering:auto"/>
<line x1="814.4" y1="73" x2="932" y2="119.5" stroke="#1a1a1a" stroke-width="1.15" style="shape-rendering:auto"/>
<line x1="813.5" y1="23" x2="813.5" y2="90.7" stroke="#1a1a1a" stroke-width="1" style="shape-rendering:auto"/>
<polyline points="2.5,415.6 6.5,418.4 10.5,416.4 14.5,412.3 18.4,406.4 22.4,400.0 26.6,393.0 30.7,385.0 34.9,378.0 39.0,372.4 43.2,366.6 47.3,360.0 51.5,352.5 55.6,344.5 59.8,337.3 64.0,331.5 68.0,325.7 73.0,320.0 78.0,315.0 82.2,308.3 86.4,301.6 90.5,295.8 94.7,290.0 98.8,285.8 102.5,284.2 106.3,284.2 110.5,285.8 114.6,289.0 118.8,292.5 126.2,295.0 130.4,297.5 134.5,300.0 138.7,301.6 142.5,302.4 146.5,303.0 150.5,303.3 154.5,305.8 158.5,308.8 162.5,310.3 166.4,311.0 170.4,311.6 174.4,312.7 178.4,314.0 182.4,314.0 186.4,312.4 190.5,309.6 194.5,306.6 198.4,303.6 202.4,301.6 206.4,300.8 210.4,300.0 214.4,299.6 218.4,300.3 222.5,300.8 226.5,301.6 230.5,302.4 234.5,303.3 238.5,304.4 242.5,305.4 246.4,307.4 250.4,310.7 254.4,313.7 258.4,315.7 262.4,317.9 266.4,320.2 270.5,322.9 274.5,324.4 278.5,325.2 282.5,325.7 286.5,324.5 290.5,323.5 294.5,322.4 298.4,324.5 302.4,326.2 306.4,327.3 310.4,328.5 314.5,327.8 318.5,328.2 322.5,329.3 326.5,329.3 330.5,327.3 334.5,324.8 338.5,322.4 342.5,319.5 346.4,317.4 350.4,316.2 354.4,315.4 358.4,315.2 362.4,315.2 366.4,315.4 370.5,316.3 374.4,317.4 378.4,315.8 382.4,315.4 386.4,316.0 390.4,317.0 394.5,317.4 398.5,320.3 402.5,322.4 406.5,324.0 410.5,327.9 414.5,331.6 418.5,336.2 422.4,340.7 426.5,344.9 430.4,349.8 434.4,354.5 438.5,358.5 442.5,361.8 446.5,365.6 450.5,369.8 454.5,374.4 458.5,376.7 462.5,378.4 466.5,380.0 470.4,381.4 474.4,382.2 478.4,381.7 482.4,381.4 486.4,381.0 490.5,379.4 494.5,376.7 498.5,373.9 502.5,370.6 506.5,367.8 510.5,364.8 514.5,361.5 518.5,358.0 522.4,354.0 526.4,349.8 530.4,345.2 534.4,340.7 538.4,336.5 542.4,333.2 546.4,330.5 550.3,327.8 554.3,323.2 558.3,318.0 562.4,312.3 566.4,306.7 570.4,301.0 574.5,295.0 578.5,288.9 582.5,283.0 586.5,276.8 590.5,270.6 594.5,264.0 598.5,257.3 602.5,251.5 606.4,245.7 610.4,239.6 614.4,233.6 618.4,227.4 622.4,219.6 626.5,211.6 630.5,203.8 634.5,198.0 638.5,192.2 642.5,186.4 646.5,179.7 650.5,174.0 654.4,169.0 658.4,164.8 662.4,160.6 666.4,157.3 670.5,154.8 674.5,151.5 678.5,147.8 682.5,143.2 686.5,139.0 690.5,133.2 694.5,127.4 698.5,124.0 702.4,120.8 706.4,118.0 710.4,115.3 714.4,111.6 718.4,109.0 722.4,106.6 726.5,103.0 730.5,101.4 734.5,100.6 738.4,99.8 742.4,98.4 746.4,96.4 750.4,94.8 754.5,92.3 758.5,88.0 762.5,84.8 766.5,82.3 770.5,80.2 774.5,78.2 778.5,75.7 782.5,73.5 786.5,72.0 790.4,71.4 794.4,70.4 798.4,68.3 802.4,65.2 806.5,61.8 810.5,58.5 814.5,55.0 818.5,52.1 822.5,49.8 826.5,48.1 830.5,47.0 834.5,46.4 838.5,46.3 842.5,46.5 846.5,47.4 850.5,48.2 854.5,49.2 858.5,49.9 862.5,50.2 866.5,50.5 870.5,50.0 874.5,49.2 878.5,49.7 882.5,50.9 886.5,52.5 890.5,55.5 894.5,58.0 898.5,60.5 903.0,62.7" fill="none" stroke="#0000ff" stroke-width="1.1" stroke-linejoin="round" style="shape-rendering:auto" />
<polyline points="2.5,384.0 6.5,398.5 14.5,375.7 22.4,356.6 26.6,339.0 30.7,329.0 34.9,318.0 39.0,311.6 42.9,309.0 46.5,311.0 49.8,300.8 54.0,291.6 58.0,287.0 62.5,289.0 66.4,288.0 70.6,288.8 74.0,277.5 78.0,271.0 82.0,268.7 86.4,268.4 90.5,270.0 94.7,269.0 98.8,274.0 103.0,280.0 106.3,290.8 110.5,309.0 114.6,325.7 118.8,334.8 122.6,338.0 126.6,334.8 130.4,331.5 134.2,334.8 138.7,320.7 142.5,315.7 146.5,311.6 150.5,309.0 154.5,305.8 158.5,302.4 162.5,301.6 166.4,300.0 170.4,293.3 174.4,292.8 178.4,296.6 182.4,298.3 186.4,295.0 190.5,290.0 194.5,287.5 198.4,290.0 202.4,296.6 206.4,303.3 210.4,308.2 214.4,312.4 218.4,312.4 222.5,312.7 226.5,313.2 230.5,315.2 234.5,316.9 238.5,316.2 242.5,316.5 246.4,326.5 250.4,334.8 254.4,340.0 258.4,342.8 262.4,345.0 266.4,338.0 270.5,334.0 274.5,327.3 278.5,323.5 282.5,321.5 286.5,312.4 290.5,305.7 294.5,302.4 296.3,311.5 298.4,321.5 302.4,328.0 306.4,330.7 310.4,332.8 314.5,328.0 318.5,324.8 322.5,329.0 326.5,335.6 330.5,324.8 334.5,317.4 338.5,311.5 342.5,306.6 346.4,302.4 350.4,300.3 354.4,301.6 358.4,303.6 362.4,307.4 366.4,308.6 370.5,308.3 374.4,310.8 378.4,316.6 382.4,324.0 386.4,330.7 390.4,337.4 394.5,333.2 398.5,347.3 402.5,357.3 406.5,364.8 410.5,369.8 414.5,372.3 418.5,379.7 422.4,386.4 426.5,382.2 430.4,388.0 434.4,386.0 438.5,384.7 442.5,384.7 446.5,385.0 450.5,390.5 454.5,394.7 458.5,390.5 462.5,383.0 466.5,377.2 470.4,373.0 474.4,370.0 478.4,368.4 482.4,368.4 486.4,370.6 490.5,360.6 494.5,350.7 498.5,344.5 502.5,340.7 506.5,337.9 510.5,335.7 514.5,333.2 518.5,330.7 522.4,320.0 526.4,313.3 530.4,309.0 534.4,307.5 538.4,307.0 542.4,305.8 546.5,303.0 551.0,301.3 554.4,286.4 558.4,278.0 562.4,272.8 566.4,269.5 570.4,258.0 574.5,242.4 578.5,231.2 582.5,225.0 586.5,218.3 590.5,208.0 594.5,203.8 598.5,199.7 602.5,193.0 606.4,188.9 610.4,187.2 614.4,188.0 618.4,179.7 622.4,174.0 626.5,169.0 630.5,162.3 634.5,156.5 638.5,151.5 642.5,153.2 646.5,154.5 650.5,145.7 654.4,136.5 658.4,130.7 662.4,126.2 666.4,123.3 670.5,124.0 674.5,122.0 678.5,123.0 682.5,115.8 686.5,108.0 690.5,101.7 694.5,91.8 698.5,93.0 702.4,94.5 706.4,91.8 710.5,93.0 714.5,88.0 718.5,90.0 722.5,91.8 726.5,92.3 730.5,94.0 734.5,93.0 738.4,95.0 742.4,96.4 746.4,89.8 750.4,87.3 754.5,85.6 758.5,74.9 762.5,65.7 766.5,57.4 770.5,52.4 774.5,50.0 778.5,45.3 782.5,45.3 786.5,50.8 790.4,55.2 794.4,56.6 798.4,53.3 802.4,49.6 806.5,47.6 810.5,41.5 814.5,36.0 818.5,39.7 822.5,40.4 826.5,43.0 830.5,45.6 834.5,48.8 838.5,51.8 842.5,54.4 846.5,56.6 850.5,58.5 854.5,57.0 858.5,54.7 862.5,52.5 866.5,54.7 870.5,57.5 874.5,52.5 878.5,57.5 882.5,62.2 886.5,66.3 890.5,70.5 894.5,74.6 898.5,78.8 903.0,82.4" fill="none" stroke="#ff0000" stroke-width="1.1" stroke-linejoin="round" style="shape-rendering:auto" />
<text x="5.8" y="17" font-size="13" font-weight="bold" fill="#333" textLength="85" lengthAdjust="spacingAndGlyphs">.NSEI - 1 hour</text>
<rect x="8" y="28" width="23" height="3" fill="#ff0000"/>
<rect x="8" y="45" width="23" height="3" fill="#0000ff"/>
<text x="34.8" y="33.7" font-size="11" fill="#333" textLength="54.6" lengthAdjust="spacingAndGlyphs">EMA High 5</text>
<text x="34.8" y="50.7" font-size="11" fill="#333" textLength="61.2" lengthAdjust="spacingAndGlyphs">SMA High 20</text>
<line x1="0" y1="521.5" x2="1073" y2="521.5" stroke="#555" stroke-width="1" stroke-dasharray="4,2"/>
<text x="4.9" y="487" font-size="12" font-weight="bold" fill="#333" textLength="126.3" lengthAdjust="spacingAndGlyphs">Relative Strength (RSI)</text>
<text x="6.9" y="502.5" font-size="11" fill="#333" textLength="49.4" lengthAdjust="spacingAndGlyphs">Close (14)</text>
<rect x="1" y="580" width="1072" height="1" fill="#333"/>
<rect x="1" y="634" width="1072" height="1" fill="#333"/>
<line x1="0" y1="607.5" x2="1073" y2="607.5" stroke="#555" stroke-width="1" stroke-dasharray="4,2"/>
<text x="4.9" y="578.5" font-size="12" font-weight="bold" fill="#333" textLength="90.2" lengthAdjust="spacingAndGlyphs">Stochastic (Full)</text>
<text x="6.4" y="594.7" font-size="11" fill="#333" textLength="62.8" lengthAdjust="spacingAndGlyphs">EMA (14,3,3)</text>
<polygon points="20.5,498.5 22.5,497.4 26.5,495.7 30.5,494.9 34.5,494.3 38.5,494.3 41.1,498.5" fill="#afcdb0" style="shape-rendering:auto"/>
<polygon points="49.8,498.5 50.5,497.4 52.3,498.5" fill="#afcdb0" style="shape-rendering:auto"/>
<polygon points="518.8,498.5 522.5,491.3 526.5,491.3 530.5,494.1 534.5,494.6 538.5,497.4 542.5,496.2 546.5,493.3 550.5,493.3 554.5,484.6 558.5,483.3 562.5,483.3 566.5,482.0 570.5,478.3 574.5,475.5 578.5,475.5 582.5,475.5 586.5,474.5 590.5,477.5 594.5,476.6 598.5,482.5 602.5,478.3 606.5,483.3 610.5,485.4 614.5,485.4 618.5,480.3 622.5,482.5 626.5,481.3 630.5,479.1 634.5,480.3 638.5,484.1 642.5,489.6 646.5,489.6 650.5,482.1 654.5,482.1 658.5,482.1 662.5,481.3 666.5,490.8 670.5,489.6 674.5,489.6 678.5,489.6 682.5,485.4 686.5,483.0 690.5,480.3 694.5,489.1 696.5,498.5" fill="#afcdb0" style="shape-rendering:auto"/>
<polygon points="755.7,498.5 758.5,492.1 762.5,495.4 766.5,492.1 770.5,493.3 774.5,493.3 777.8,498.5" fill="#afcdb0" style="shape-rendering:auto"/>
<polygon points="808.4,498.5 810.5,495.4 811.1,498.5" fill="#afcdb0" style="shape-rendering:auto"/>
<polygon points="424.0,544.5 426.5,546.4 430.5,546.4 431.0,544.5" fill="#f0b0b0" style="shape-rendering:auto"/>
<rect x="1" y="498" width="1072" height="1" fill="#333"/>
<rect x="1" y="544" width="1072" height="1" fill="#333"/>
<polyline points="2.5,512.7 6.5,512.7 10.5,504.5 14.5,501.6 18.5,499.6 22.5,497.4 26.5,495.7 30.5,494.9 34.5,494.3 38.5,494.3 42.5,500.7 46.5,504.0 50.5,497.4 54.5,499.9 58.5,506.5 62.5,504.9 66.5,503.7 70.5,503.2 74.5,499.0 78.5,499.0 82.5,505.2 86.5,504.4 90.5,507.4 94.5,507.9 98.5,509.4 102.5,509.4 106.5,528.5 110.5,527.3 114.5,529.8 118.5,532.6 122.5,525.6 126.5,519.3 130.5,522.7 134.5,522.7 138.5,514.5 142.5,515.2 146.5,514.4 150.5,515.3 154.5,514.0 158.5,511.2 162.5,513.5 166.5,513.5 170.5,511.2 174.5,516.5 178.5,516.5 182.5,514.5 186.5,514.2 190.5,506.2 194.5,513.5 198.5,513.5 202.5,526.5 206.5,526.5 210.5,524.5 214.5,528.5 218.5,526.5 222.5,522.0 226.5,522.5 230.5,522.5 234.5,525.6 238.5,521.5 242.5,534.0 246.5,540.6 250.5,536.8 254.5,535.3 258.5,531.5 262.5,531.5 266.5,523.2 270.5,519.0 274.5,514.2 278.5,515.2 282.5,516.5 286.5,507.9 290.5,506.2 294.5,506.2 298.5,536.8 302.5,527.8 306.5,525.6 310.5,523.5 314.5,518.5 318.5,528.5 322.5,526.5 326.5,526.5 330.5,514.5 334.5,514.4 338.5,513.5 342.5,513.2 346.5,511.2 350.5,513.2 354.5,515.2 358.5,515.2 362.5,524.3 366.5,517.3 370.5,520.3 374.5,528.5 378.5,531.5 382.5,531.5 386.5,531.5 390.5,531.5 394.5,537.8 398.5,541.4 402.5,542.6 406.5,540.3 410.5,541.4 414.5,543.9 418.5,543.1 422.5,543.4 426.5,546.4 430.5,546.4 434.5,531.5 438.5,533.1 442.5,531.1 446.5,537.0 450.5,538.1 454.5,538.1 458.5,525.3 462.5,518.5 466.5,516.2 470.5,517.3 474.5,519.3 478.5,522.3 482.5,519.3 486.5,519.3 490.5,506.2 494.5,504.4 498.5,503.2 502.5,502.9 506.5,501.9 510.5,502.1 514.5,499.6 518.5,499.1 522.5,491.3 526.5,491.3 530.5,494.1 534.5,494.6 538.5,497.4 542.5,496.2 546.5,493.3 550.5,493.3 554.5,484.6 558.5,483.3 562.5,483.3 566.5,482.0 570.5,478.3 574.5,475.5 578.5,475.5 582.5,475.5 586.5,474.5 590.5,477.5 594.5,476.6 598.5,482.5 602.5,478.3 606.5,483.3 610.5,485.4 614.5,485.4 618.5,480.3 622.5,482.5 626.5,481.3 630.5,479.1 634.5,480.3 638.5,484.1 642.5,489.6 646.5,489.6 650.5,482.1 654.5,482.1 658.5,482.1 662.5,481.3 666.5,490.8 670.5,489.6 674.5,489.6 678.5,489.6 682.5,485.4 686.5,483.0 690.5,480.3 694.5,489.1 698.5,507.9 702.5,512.9 706.5,501.2 710.5,501.2 714.5,503.2 718.5,505.2 722.5,505.4 726.5,507.4 730.5,503.6 734.5,507.4 738.5,506.5 742.5,506.2 746.5,500.4 750.5,504.6 754.5,501.2 758.5,492.1 762.5,495.4 766.5,492.1 770.5,493.3 774.5,493.3 778.5,499.6 782.5,504.0 786.5,511.2 790.5,513.5 794.5,508.5 798.5,503.7 802.5,501.2 806.5,501.2 810.5,495.4 814.5,517.3 818.5,513.5 822.5,512.4 826.5,514.0 830.5,515.2 834.5,515.2 838.5,515.2 842.5,518.2 846.5,521.5 850.5,519.3 854.5,514.5 858.5,511.2 862.5,522.8 866.5,519.3 870.5,519.3 874.5,523.2 878.5,529.5 882.5,524.3 886.5,525.6 890.5,533.5 894.5,533.5 898.5,533.5 902.5,533.5" fill="none" stroke="#2a2a2a" stroke-width="1" stroke-linejoin="round" style="shape-rendering:auto" />
<polyline points="2.5,607.5 6.5,611.2 10.5,600.5 14.5,590.6 18.5,581.3 22.5,574.6 26.5,570.1 30.5,566.5 34.5,566.5 38.5,566.5 42.5,569.3 46.5,572.3 50.5,572.6 54.5,571.5 58.5,577.6 62.5,580.9 66.5,580.6 70.5,582.1 74.5,579.6 78.5,581.8 82.5,590.9 86.5,592.6 90.5,596.7 94.5,599.2 98.5,601.7 102.5,604.5 106.5,627.4 110.5,636.1 114.5,641.1 118.5,646.5 122.5,640.4 126.5,630.8 130.5,626.6 134.5,625.5 138.5,610.0 142.5,604.5 146.5,599.2 150.5,594.2 154.5,588.4 158.5,577.3 162.5,573.0 166.5,570.6 170.5,576.8 174.5,585.1 178.5,590.9 182.5,593.9 186.5,597.2 190.5,585.6 194.5,590.1 198.5,592.9 202.5,619.1 206.5,627.1 210.5,628.3 214.5,636.1 218.5,636.1 222.5,631.6 226.5,627.4 230.5,626.6 234.5,623.8 238.5,616.6 242.5,629.9 246.5,638.2 250.5,636.6 254.5,634.4 258.5,626.1 262.5,623.3 266.5,611.7 270.5,597.9 274.5,584.3 278.5,578.4 282.5,576.8 286.5,572.6 290.5,569.3 294.5,567.6 298.5,599.5 302.5,603.0 306.5,603.0 310.5,600.9 314.5,593.4 318.5,603.9 322.5,606.7 326.5,608.0 330.5,591.7 334.5,583.4 338.5,577.6 342.5,574.6 346.5,571.5 350.5,571.5 354.5,575.1 358.5,579.6 362.5,595.6 366.5,590.9 370.5,594.2 374.5,614.2 378.5,630.8 382.5,639.1 386.5,640.2 390.5,641.6 394.5,645.4 398.5,647.4 402.5,647.4 406.5,645.2 410.5,644.6 414.5,647.0 418.5,647.5 422.5,647.4 426.5,646.5 430.5,644.9 434.5,632.4 438.5,629.4 442.5,626.6 446.5,633.3 450.5,631.6 454.5,630.8 458.5,609.2 462.5,587.6 466.5,577.3 470.5,574.3 474.5,574.3 478.5,581.3 482.5,579.6 486.5,579.6 490.5,571.8 494.5,569.6 498.5,567.6 502.5,568.5 506.5,567.6 510.5,567.1 514.5,566.5 518.5,566.5 522.5,568.5 526.5,569.6 530.5,571.3 534.5,572.6 538.5,574.3 542.5,572.6 546.5,571.8 550.5,570.6 554.5,572.3 558.5,571.5 562.5,571.0 566.5,568.5 570.5,567.3 574.5,565.5 578.5,566.5 582.5,567.1 586.5,566.5 590.5,571.0 594.5,571.5 598.5,573.1 602.5,569.6 606.5,571.3 610.5,573.1 614.5,574.3 618.5,568.5 622.5,566.5 626.5,565.5 630.5,565.5 634.5,566.5 638.5,573.0 642.5,580.6 646.5,583.1 650.5,575.1 654.5,572.6 658.5,572.6 662.5,568.5 666.5,573.1 670.5,574.3 674.5,575.6 678.5,577.3 682.5,578.1 686.5,571.8 690.5,567.6 694.5,576.0 698.5,595.1 702.5,615.0 706.5,604.2 710.5,599.5 714.5,599.5 718.5,600.9 722.5,602.2 726.5,607.2 730.5,603.7 734.5,605.0 738.5,605.5 742.5,605.9 746.5,595.9 750.5,592.2 754.5,583.4 758.5,572.6 762.5,570.5 766.5,569.3 770.5,569.3 774.5,569.3 778.5,577.6 782.5,585.1 786.5,594.2 790.5,604.5 794.5,603.4 798.5,595.1 802.5,586.7 806.5,582.6 810.5,574.0 814.5,600.5 818.5,605.0 822.5,605.5 826.5,608.3 830.5,611.3 834.5,613.3 838.5,614.5 842.5,619.1 846.5,627.4 850.5,630.4 854.5,623.3 858.5,615.0 862.5,627.4 866.5,627.4 870.5,622.8 874.5,629.1 878.5,630.4 882.5,623.8 886.5,622.5 890.5,636.2 894.5,634.4 898.5,633.6 902.5,632.8" fill="none" stroke="#2a2a2a" stroke-width="1.45" stroke-linejoin="round" style="shape-rendering:auto" />
<polyline points="2.5,598.4 6.5,604.5 10.5,602.5 14.5,596.7 18.5,588.9 22.5,581.8 26.5,575.6 30.5,571.0 34.5,568.5 38.5,568.0 42.5,569.0 46.5,570.6 50.5,571.8 54.5,571.8 58.5,574.6 62.5,577.6 66.5,578.9 70.5,580.6 74.5,580.1 78.5,580.9 82.5,585.9 86.5,589.2 90.5,593.1 94.5,596.2 98.5,599.2 102.5,602.2 106.5,615.0 110.5,625.5 114.5,633.3 118.5,640.4 122.5,640.4 126.5,635.4 130.5,630.8 134.5,628.3 138.5,619.1 142.5,611.7 146.5,605.5 150.5,600.0 154.5,593.9 158.5,585.6 162.5,578.9 166.5,575.6 170.5,575.6 174.5,580.6 178.5,585.6 182.5,589.6 186.5,593.4 190.5,589.2 194.5,590.1 198.5,591.7 202.5,604.5 206.5,615.0 210.5,621.6 214.5,628.8 218.5,633.8 222.5,632.4 226.5,630.4 230.5,628.8 234.5,626.1 238.5,621.6 242.5,625.5 246.5,631.6 250.5,634.1 254.5,634.1 258.5,630.4 262.5,626.6 266.5,619.5 270.5,608.8 274.5,596.7 278.5,587.6 282.5,582.3 286.5,577.3 290.5,573.5 294.5,570.1 298.5,584.3 302.5,593.9 306.5,598.9 310.5,600.0 314.5,596.7 318.5,600.0 322.5,603.4 326.5,605.9 330.5,598.9 334.5,591.2 338.5,584.3 342.5,579.3 346.5,575.1 350.5,573.0 354.5,574.3 358.5,576.3 362.5,585.6 366.5,588.4 370.5,591.7 374.5,604.2 378.5,617.5 382.5,628.3 386.5,634.6 390.5,637.7 394.5,641.6 398.5,644.4 402.5,646.0 406.5,645.4 410.5,645.4 414.5,646.0 418.5,647.0 422.5,647.4 426.5,646.9 430.5,645.7 434.5,639.1 438.5,634.1 442.5,630.4 446.5,631.6 450.5,631.6 454.5,631.1 458.5,620.0 462.5,603.9 466.5,590.6 470.5,582.3 474.5,578.4 478.5,579.3 482.5,579.6 486.5,579.6 490.5,575.6 494.5,572.6 498.5,570.1 502.5,569.3 506.5,568.1 510.5,567.6 514.5,567.3 518.5,567.1 522.5,568.0 526.5,569.0 530.5,570.1 534.5,571.3 538.5,573.0 542.5,572.6 546.5,572.0 550.5,571.3 554.5,572.0 558.5,571.8 562.5,571.5 566.5,570.1 570.5,569.0 574.5,567.3 578.5,567.1 582.5,567.3 586.5,566.8 590.5,569.0 594.5,570.1 598.5,571.5 602.5,570.5 606.5,571.0 610.5,572.3 614.5,573.5 618.5,571.0 622.5,568.5 626.5,567.3 630.5,566.3 634.5,566.5 638.5,570.1 642.5,575.1 646.5,579.3 650.5,577.1 654.5,574.6 658.5,573.5 662.5,570.6 666.5,572.3 670.5,573.5 674.5,574.3 678.5,575.6 682.5,577.1 686.5,574.0 690.5,571.0 694.5,576.0 698.5,583.4 702.5,599.5 706.5,601.4 710.5,600.5 714.5,600.0 718.5,600.5 722.5,601.4 726.5,604.2 730.5,604.2 734.5,604.5 738.5,605.0 742.5,605.5 746.5,600.9 750.5,596.7 754.5,590.6 758.5,580.9 762.5,575.6 766.5,572.3 770.5,571.3 774.5,570.5 778.5,574.3 782.5,579.6 786.5,587.6 790.5,595.6 794.5,599.5 798.5,596.7 802.5,591.7 806.5,587.2 810.5,580.9 814.5,590.9 818.5,598.4 822.5,601.7 826.5,605.0 830.5,608.3 834.5,611.2 838.5,612.5 842.5,615.8 846.5,621.6 850.5,626.6 854.5,625.0 858.5,620.0 862.5,623.3 866.5,625.5 870.5,624.1 874.5,626.6 878.5,628.8 882.5,626.3 886.5,624.1 890.5,629.9 894.5,632.4 898.5,632.8 902.5,632.4" fill="none" stroke="#cc0000" stroke-width="1" stroke-linejoin="round" style="shape-rendering:auto" />
<rect x="1072" y="556" width="6" height="1" fill="#000"/>
<rect x="1075" y="544" width="3" height="1" fill="#000"/>
<rect x="1072" y="533" width="6" height="1" fill="#000"/>
<rect x="1075" y="521" width="3" height="1" fill="#000"/>
<rect x="1072" y="510" width="6" height="1" fill="#000"/>
<rect x="1075" y="498" width="3" height="1" fill="#000"/>
<rect x="1072" y="487" width="6" height="1" fill="#000"/>
<rect x="1075" y="475" width="3" height="1" fill="#000"/>
<rect x="1075" y="640" width="3" height="1" fill="#000"/>
<rect x="1072" y="629" width="6" height="1" fill="#000"/>
<rect x="1075" y="618" width="3" height="1" fill="#000"/>
<rect x="1072" y="607" width="6" height="1" fill="#000"/>
<rect x="1075" y="596" width="3" height="1" fill="#000"/>
<rect x="1072" y="585" width="6" height="1" fill="#000"/>
<rect x="1075" y="574" width="3" height="1" fill="#000"/>
<text x="1081.2" y="491.5" font-size="12" fill="#111">80.0</text>
<text x="1081.2" y="514.7" font-size="12" fill="#111">60.0</text>
<path d="M1073.5 498.5 L1079 491.5 H1105.5 Q1107.5 491.5 1107.5 493.5 V503 Q1107.5 505 1105.5 505 H1079 Z" fill="url(#tg)" stroke="#555" stroke-width="1" style="shape-rendering:auto"/>
<text x="1081.2" y="503" font-size="12" fill="#111">70.0</text>
<path d="M1073.5 521.5 L1079 514.5 H1105.5 Q1107.5 514.5 1107.5 516.5 V526 Q1107.5 528 1105.5 528 H1079 Z" fill="url(#tg)" stroke="#555" stroke-width="1" style="shape-rendering:auto"/>
<text x="1081.2" y="526" font-size="12" fill="#111">50.0</text>
<path d="M1073.5 544.5 L1079 537.5 H1105.5 Q1107.5 537.5 1107.5 539.5 V549 Q1107.5 551 1105.5 551 H1079 Z" fill="url(#tg)" stroke="#555" stroke-width="1" style="shape-rendering:auto"/>
<text x="1081.2" y="549" font-size="12" fill="#111">30.0</text>
<path d="M1073.5 533.5 L1079 526.5 H1105.5 Q1107.5 526.5 1107.5 528.5 V538 Q1107.5 540 1105.5 540 H1079 Z" fill="#fff" stroke="#000" stroke-width="1" style="shape-rendering:auto"/>
<text x="1081.2" y="538" font-size="12" fill="#111">39.2</text>
<text x="1081.2" y="590" font-size="12" fill="#111">75.0</text>
<path d="M1073.5 580.5 L1079 573.5 H1105.5 Q1107.5 573.5 1107.5 575.5 V585 Q1107.5 587 1105.5 587 H1079 Z" fill="url(#tg)" stroke="#555" stroke-width="1" style="shape-rendering:auto"/>
<text x="1081.2" y="585" font-size="12" fill="#111">80.0</text>
<path d="M1073.5 607.5 L1079 600.5 H1105.5 Q1107.5 600.5 1107.5 602.5 V612 Q1107.5 614 1105.5 614 H1079 Z" fill="url(#tg)" stroke="#555" stroke-width="1" style="shape-rendering:auto"/>
<text x="1081.2" y="612" font-size="12" fill="#111">50.0</text>
<path d="M1073.5 634.5 L1079 627.5 H1105.5 Q1107.5 627.5 1107.5 629.5 V639 Q1107.5 641 1105.5 641 H1079 Z" fill="url(#tg)" stroke="#555" stroke-width="1" style="shape-rendering:auto"/>
<text x="1081.2" y="639" font-size="12" fill="#111">20.0</text>
<path d="M1073.5 632.5 L1079 625.5 H1105.5 Q1107.5 625.5 1107.5 627.5 V637 Q1107.5 639 1105.5 639 H1079 Z" fill="#fff" stroke="#000" stroke-width="1" style="shape-rendering:auto"/>
<text x="1081.2" y="637" font-size="12" fill="#111">21.8</text>
<path d="M1073.5 91.5 L1079 84.5 H1126.5 Q1128.5 84.5 1128.5 86.5 V96.5 Q1128.5 98.5 1126.5 98.5 H1079 Z" fill="#fff" stroke="#000" stroke-width="1" style="shape-rendering:auto"/>
<text x="1082" y="96" font-size="12" fill="#111">5842.00</text>
<rect x="1030" y="640" width="101" height="11" fill="#fff"/>
<text x="1034" y="648" font-size="9" font-weight="bold" fill="#333" textLength="93.5" lengthAdjust="spacing" font-family="DejaVu Sans, Liberation Sans, sans-serif">motivewave.com</text>
<rect x="0.5" y="0.5" width="1131" height="651" fill="none" stroke="#000" stroke-width="1"/>
</svg></body></html>
